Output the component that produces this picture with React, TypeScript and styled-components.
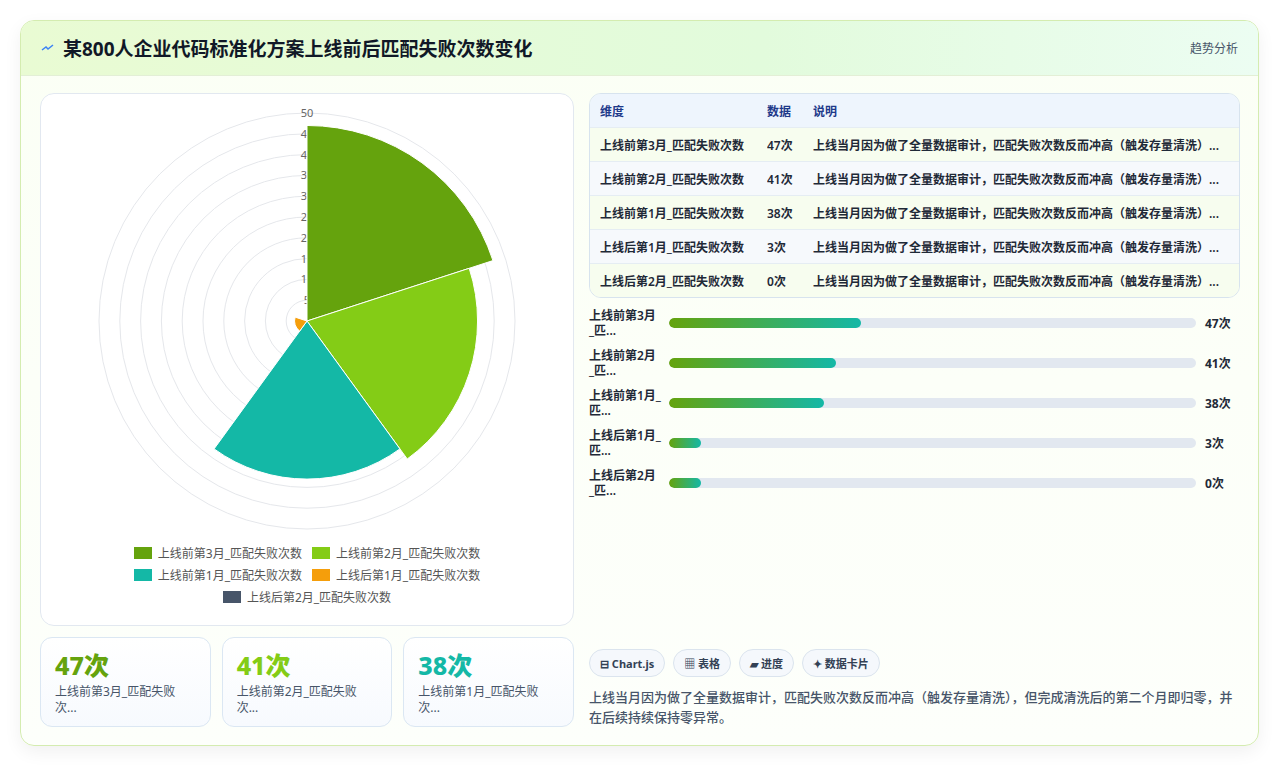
import React from 'react';
import styled, { createGlobalStyle } from 'styled-components';

const GlobalStyle = createGlobalStyle`
  body {
    margin: 0;
    background: #ffffff;
    font-family: "Noto Sans", "Noto Sans CJK SC", sans-serif;
  }
`;

const COLORS = ['#65a30d', '#84cc16', '#14b8a6', '#f59e0b', '#475569'];

const rows = [
  { name: '上线前第3月_匹配失败次数', short: '上线前第3月\n_匹...', value: 47 },
  { name: '上线前第2月_匹配失败次数', short: '上线前第2月\n_匹...', value: 41 },
  { name: '上线前第1月_匹配失败次数', short: '上线前第1月_\n匹...', value: 38 },
  { name: '上线后第1月_匹配失败次数', short: '上线后第1月_\n匹...', value: 3 },
  { name: '上线后第2月_匹配失败次数', short: '上线后第2月\n_匹...', value: 0 },
];

const note = '上线当月因为做了全量数据审计，匹配失败次数反而冲高（触发存量清洗）...';

const Page = styled.div`
  padding: 20px 21px 20px 20px;
`;

const Card = styled.div`
  border: 1px solid #d4ecb0;
  border-radius: 14px;
  background: linear-gradient(180deg, #fbfff5 0%, #fdfffb 100%);
  box-shadow: 0 6px 18px rgba(0, 0, 0, 0.06);
  overflow: hidden;
`;

const Header = styled.div`
  height: 54px;
  display: flex;
  align-items: center;
  justify-content: space-between;
  padding: 0 20px;
  background: linear-gradient(90deg, #e9fbd3 0%, #e2fbdc 60%, #ecfdf2 100%);
  border-bottom: 1px solid #e3efd6;
`;

const Title = styled.h1`
  margin: 0;
  font-size: 19px;
  font-weight: 700;
  color: #111827;
  display: flex;
  align-items: center;
  gap: 8px;
`;

const Tag = styled.span`
  font-size: 12px;
  color: #475569;
`;

const Body = styled.div`
  display: grid;
  grid-template-columns: 534px 1fr;
  gap: 15px;
  padding: 17px 18px 18px 19px;
`;

const Column = styled.div`
  display: flex;
  flex-direction: column;
  gap: 11px;
`;

const ChartCard = styled.div`
  height: 531px;
  border: 1px solid #e2e8f0;
  border-radius: 14px;
  background: #fff;
  display: flex;
  flex-direction: column;
  align-items: center;
`;

const Legend = styled.div`
  display: flex;
  flex-wrap: wrap;
  justify-content: center;
  width: 380px;
  row-gap: 6px;
  column-gap: 10px;
  margin-top: 6px;
`;

const LegendItem = styled.div`
  display: flex;
  align-items: center;
  gap: 6px;
  font-size: 12px;
  color: #555;
  height: 16px;
`;

const Swatch = styled.span<{ $c: string }>`
  width: 18px;
  height: 12px;
  background: ${(p) => p.$c};
`;

const Stats = styled.div`
  display: grid;
  grid-template-columns: repeat(3, 1fr);
  gap: 11px;
`;

const Stat = styled.div`
  height: 90px;
  box-sizing: border-box;
  border: 1px solid #dbe7f3;
  border-radius: 12px;
  background: linear-gradient(180deg, #ffffff, #f7fafe);
  padding: 10px 14px;
`;

const StatValue = styled.div<{ $c: string }>`
  font-size: 25px;
  font-weight: 800;
  color: ${(p) => p.$c};
  line-height: 34px;
`;

const StatLabel = styled.div`
  font-size: 12px;
  color: #475569;
  line-height: 16px;
  margin-top: 2px;
`;

const Table = styled.div`
  border: 1px solid #d7e3ee;
  border-radius: 12px;
  overflow: hidden;
  font-size: 12px;
`;

const Row = styled.div<{ $bg: string; $head?: boolean }>`
  display: grid;
  grid-template-columns: 167px 46px 1fr;
  height: 33px;
  align-items: center;
  padding: 0 10px;
  background: ${(p) => p.$bg};
  border-bottom: 1px solid #e5edf3;
  font-weight: ${(p) => (p.$head ? 700 : 600)};
  color: ${(p) => (p.$head ? '#1e3a8a' : '#1f2937')};
  &:last-child { border-bottom: none; }
`;

const Cell = styled.span`
  white-space: nowrap;
  overflow: hidden;
  text-overflow: ellipsis;
`;

const Bars = styled.div`
  display: flex;
  flex-direction: column;
  gap: 10px;
  margin-top: 10px;
`;

const BarRow = styled.div`
  display: grid;
  grid-template-columns: 80px 1fr 44px;
  align-items: center;
  height: 30px;
`;

const BarLabel = styled.div`
  font-size: 12px;
  font-weight: 600;
  color: #1f2937;
  line-height: 15px;
  white-space: pre-line;
`;

const Track = styled.div`
  height: 10px;
  border-radius: 5px;
  background: #e2e8f0;
  overflow: hidden;
`;

const Fill = styled.div`
  height: 100%;
  border-radius: 5px;
  background: linear-gradient(90deg, #65a30d, #14b8a6);
`;

const BarValue = styled.div`
  font-size: 12px;
  font-weight: 700;
  color: #1f2937;
  padding-left: 9px;
`;

const Spacer = styled.div`
  flex: 1;
`;

const Chips = styled.div`
  display: flex;
  gap: 8px;
`;

const Chip = styled.span`
  height: 28px;
  box-sizing: border-box;
  padding: 0 10px;
  border: 1px solid #dbe4ee;
  border-radius: 14px;
  background: #f5f8fc;
  display: flex;
  align-items: center;
  gap: 4px;
  font-size: 11px;
  font-weight: 700;
  color: #334155;
`;

const Summary = styled.p`
  margin: 10px 0 0;
  font-size: 13px;
  line-height: 20px;
  color: #475569;
  font-weight: 500;
`;

function PolarChart() {
  const cx = 267;
  const cy = 227;
  const R = 208;
  const total = rows.map((r) => r.value);
  const arc = (v: number, a0: number, a1: number) => {
    const r = (v / 50) * R;
    const p = (a: number) => [cx + r * Math.cos((a * Math.PI) / 180), cy + r * Math.sin((a * Math.PI) / 180)];
    const [x0, y0] = p(a0);
    const [x1, y1] = p(a1);
    return `M${cx},${cy} L${x0},${y0} A${r},${r} 0 0 1 ${x1},${y1} Z`;
  };
  return (
    <svg width="534" height="445" viewBox="0 0 534 445">
      {Array.from({ length: 10 }, (_, i) => (
        <circle key={i} cx={cx} cy={cy} r={((i + 1) * R) / 10} fill="none" stroke="#e5e7eb" strokeWidth="1" />
      ))}
      {Array.from({ length: 10 }, (_, i) => {
        const v = (i + 1) * 5;
        const y = cy - (v / 50) * R;
        return (
          <text key={v} x={cx} y={y + 4} textAnchor="middle" fontSize="11" fill="#666" fontFamily="Noto Sans, sans-serif">
            {v}
          </text>
        );
      })}
      {total.map((v, i) => (
        <path key={i} d={arc(v, -90 + i * 72, -18 + i * 72)} fill={COLORS[i]} stroke="#fff" strokeWidth="1" />
      ))}
    </svg>
  );
}

export default function App() {
  const sum = rows.reduce((s, r) => s + r.value, 0);
  return (
    <>
      <GlobalStyle />
      <Page>
        <Card>
          <Header>
            <Title>
              <svg width="14" height="14" viewBox="0 0 14 14">
                <path d="M1 9 L5 6 L7 8 L12 4" stroke="#3b82f6" strokeWidth="1.5" fill="none" />
              </svg>
              某800人企业代码标准化方案上线前后匹配失败次数变化
            </Title>
            <Tag>趋势分析</Tag>
          </Header>
          <Body>
            <Column>
              <ChartCard>
                <PolarChart />
                <Legend>
                  {rows.map((r, i) => (
                    <LegendItem key={r.name}>
                      <Swatch $c={COLORS[i]} />
                      {r.name}
                    </LegendItem>
                  ))}
                </Legend>
              </ChartCard>
              <Stats>
                <Stat>
                  <StatValue $c="#65a30d">47次</StatValue>
                  <StatLabel>上线前第3月_匹配失败<br />次...</StatLabel>
                </Stat>
                <Stat>
                  <StatValue $c="#84cc16">41次</StatValue>
                  <StatLabel>上线前第2月_匹配失败<br />次...</StatLabel>
                </Stat>
                <Stat>
                  <StatValue $c="#14b8a6">38次</StatValue>
                  <StatLabel>上线前第1月_匹配失败次...</StatLabel>
                </Stat>
              </Stats>
            </Column>
            <Column style={{ gap: 0 }}>
              <Table>
                <Row $bg="#eef5fd" $head>
                  <Cell>维度</Cell>
                  <Cell>数据</Cell>
                  <Cell>说明</Cell>
                </Row>
                {rows.map((r, i) => (
                  <Row key={r.name} $bg={i % 2 === 0 ? '#f7fdef' : '#f6f9fc'}>
                    <Cell>{r.name}</Cell>
                    <Cell>{r.value}次</Cell>
                    <Cell>{note}</Cell>
                  </Row>
                ))}
              </Table>
              <Bars>
                {rows.map((r) => (
                  <BarRow key={r.name}>
                    <BarLabel>{r.short}</BarLabel>
                    <Track>
                      <Fill style={{ width: `${Math.max((r.value / sum) * 100, 6)}%` }} />
                    </Track>
                    <BarValue>{r.value}次</BarValue>
                  </BarRow>
                ))}
              </Bars>
              <Spacer />
              <Chips>
                <Chip>⊟ Chart.js</Chip>
                <Chip>▦ 表格</Chip>
                <Chip>▰ 进度</Chip>
                <Chip>✦ 数据卡片</Chip>
              </Chips>
              <Summary>
                上线当月因为做了全量数据审计，匹配失败次数反而冲高（触发存量清洗），但完成清洗后的第二个月即归零，并在后续持续保持零异常。
              </Summary>
            </Column>
          </Body>
        </Card>
      </Page>
    </>
  );
}
